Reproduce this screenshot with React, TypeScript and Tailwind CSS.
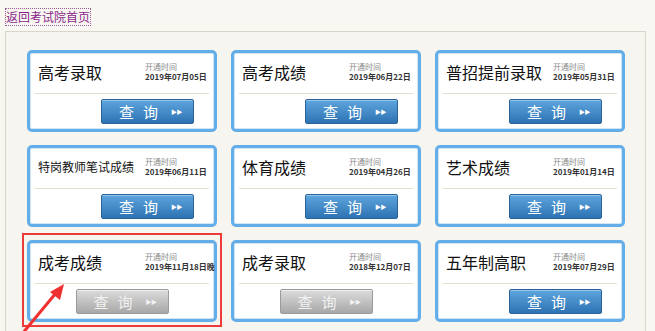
import React from 'react';

interface Exam {
  title: string;
  date: string;
  open: boolean;
  small?: boolean;
  marked?: boolean;
  empty?: boolean;
}

const EXAMS: Exam[] = [
  { title: '高考录取', date: '2019年07月05日', open: true },
  { title: '高考成绩', date: '2019年06月22日', open: true },
  { title: '普招提前录取', date: '2019年05月31日', open: true },
  { title: '特岗教师笔试成绩', date: '2019年06月11日', open: true, small: true },
  { title: '体育成绩', date: '2019年04月26日', open: true },
  { title: '艺术成绩', date: '2019年01月14日', open: true },
  { title: '成考成绩', date: '2019年11月18日晚', open: false, marked: true },
  { title: '成考录取', date: '2018年12月07日', open: false },
  { title: '五年制高职', date: '2019年07月29日', open: true },
  { title: '', date: '', open: true, empty: true },
  { title: '', date: '', open: true, empty: true },
  { title: '', date: '', open: true, empty: true },
];

function QueryButton({ open }: { open: boolean }) {
  return (
    <div
      className={
        open
          ? 'flex h-[25px] w-[93px] items-center rounded-[2px] border border-[#2a6399] bg-gradient-to-b from-[#5ea6de] to-[#2d73b3] pl-[17px] text-white shadow-[inset_0_1px_0_rgba(255,255,255,0.35)]'
          : 'flex h-[25px] w-[93px] items-center rounded-[2px] border border-[#9a9a9a] bg-gradient-to-b from-[#dcdcdc] to-[#a8a8a8] pl-[17px] text-[#f2f2f2] shadow-[inset_0_1px_0_rgba(255,255,255,0.5)]'
      }
    >
      <span className="text-[15px] leading-none tracking-[9px]">查询</span>
      <span className="ml-[4px] text-[6px] leading-none tracking-[-0.5px]">▶▶</span>
    </div>
  );
}

function ExamCard({ exam }: { exam: Exam }) {
  return (
    <div className="relative h-[82px]">
      {exam.marked && (
        <div className="absolute -left-[5px] -right-[5px] -top-[7px] -bottom-[5px] border-2 border-[#ec3b3b]" />
      )}
      <div className="relative flex h-full flex-col rounded-[5px] border-[3px] border-[#63ade8] bg-white shadow-[inset_0_0_0_1px_#cfe6f8]">
        {!exam.empty && (
          <>
            <div className="flex h-[40px] shrink-0 items-center pb-[3px] pl-2">
              <div
                className={
                  exam.small
                    ? 'w-[107px] shrink-0 whitespace-nowrap text-[12px] leading-none text-[#111]'
                    : 'w-[107px] shrink-0 whitespace-nowrap text-[16px] leading-none text-[#111]'
                }
              >
                {exam.title}
              </div>
              <div className="flex flex-col whitespace-nowrap leading-none">
                <span className="text-[8px] text-[#8a8a8a]">开通时间</span>
                <span className="mt-[2px] text-[8px] font-bold text-[#333]">{exam.date}</span>
              </div>
            </div>
            <div className="mx-[5px] h-px bg-[#e3dfcf]" />
            <div className={exam.open ? 'flex justify-end pr-5 pt-[5px]' : 'flex justify-center pt-[5px]'}>
              <QueryButton open={exam.open} />
            </div>
          </>
        )}
      </div>
    </div>
  );
}

export default function App() {
  return (
    <div
      className="relative h-[331px] w-[655px] overflow-hidden bg-[#f8f7f2]"
      style={{ fontFamily: '"Noto Sans CJK SC", "Liberation Sans", sans-serif' }}
    >
      <div className="pl-[5px] pt-[3px]">
        <a className="inline-block border border-dotted border-[#9a5a9a] text-[12px] leading-[16px] text-[#8a1f8a]">
          返回考试院首页
        </a>
      </div>
      <div className="ml-[5px] mt-[4px] w-[641px] border-l border-t border-r border-[#d6d4cc] bg-[#f6f5ef] pl-[21px] pr-[19px] pt-[18px]">
        <div className="grid grid-cols-[190px_190px_190px] gap-x-[14px] gap-y-[13px]">
          {EXAMS.map((exam, i) => (
            <ExamCard key={i} exam={exam} />
          ))}
        </div>
      </div>
      <svg className="absolute left-0 top-0" width="655" height="331" viewBox="0 0 655 331">
        <line x1="22" y1="334" x2="56" y2="293" stroke="#ee3030" strokeWidth="3" />
        <polygon points="64,284 50,292 60,300" fill="#ee3030" />
      </svg>
    </div>
  );
}
